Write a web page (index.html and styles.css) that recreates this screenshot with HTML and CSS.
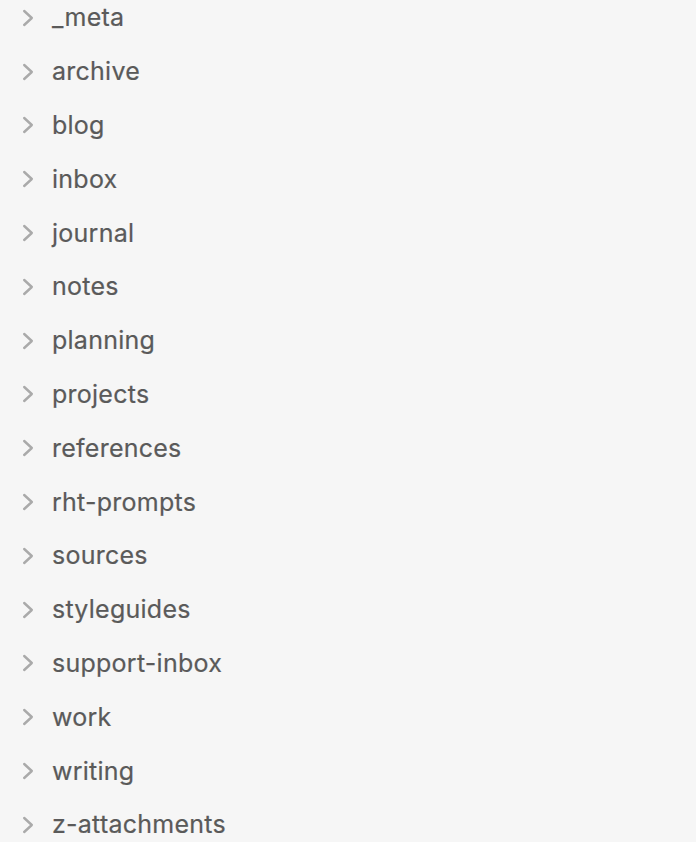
FILE: index.html
```html
<!DOCTYPE html>
<html lang="en">
<head>
<meta charset="utf-8">
<title>Files</title>
<link rel="stylesheet" href="styles.css">
</head>
<body>
<nav class="tree">
  <ul class="tree-list">
    <li class="folder"><svg class="chevron" viewBox="0 0 12 18"><path d="M2.2 2 L9.8 9 L2.2 16"/></svg><span class="name">_meta</span></li>
    <li class="folder"><svg class="chevron" viewBox="0 0 12 18"><path d="M2.2 2 L9.8 9 L2.2 16"/></svg><span class="name">archive</span></li>
    <li class="folder"><svg class="chevron" viewBox="0 0 12 18"><path d="M2.2 2 L9.8 9 L2.2 16"/></svg><span class="name">blog</span></li>
    <li class="folder"><svg class="chevron" viewBox="0 0 12 18"><path d="M2.2 2 L9.8 9 L2.2 16"/></svg><span class="name">inbox</span></li>
    <li class="folder"><svg class="chevron" viewBox="0 0 12 18"><path d="M2.2 2 L9.8 9 L2.2 16"/></svg><span class="name">journal</span></li>
    <li class="folder"><svg class="chevron" viewBox="0 0 12 18"><path d="M2.2 2 L9.8 9 L2.2 16"/></svg><span class="name">notes</span></li>
    <li class="folder"><svg class="chevron" viewBox="0 0 12 18"><path d="M2.2 2 L9.8 9 L2.2 16"/></svg><span class="name">planning</span></li>
    <li class="folder"><svg class="chevron" viewBox="0 0 12 18"><path d="M2.2 2 L9.8 9 L2.2 16"/></svg><span class="name">projects</span></li>
    <li class="folder"><svg class="chevron" viewBox="0 0 12 18"><path d="M2.2 2 L9.8 9 L2.2 16"/></svg><span class="name">references</span></li>
    <li class="folder"><svg class="chevron" viewBox="0 0 12 18"><path d="M2.2 2 L9.8 9 L2.2 16"/></svg><span class="name">rht-prompts</span></li>
    <li class="folder"><svg class="chevron" viewBox="0 0 12 18"><path d="M2.2 2 L9.8 9 L2.2 16"/></svg><span class="name">sources</span></li>
    <li class="folder"><svg class="chevron" viewBox="0 0 12 18"><path d="M2.2 2 L9.8 9 L2.2 16"/></svg><span class="name">styleguides</span></li>
    <li class="folder"><svg class="chevron" viewBox="0 0 12 18"><path d="M2.2 2 L9.8 9 L2.2 16"/></svg><span class="name">support-inbox</span></li>
    <li class="folder"><svg class="chevron" viewBox="0 0 12 18"><path d="M2.2 2 L9.8 9 L2.2 16"/></svg><span class="name">work</span></li>
    <li class="folder"><svg class="chevron" viewBox="0 0 12 18"><path d="M2.2 2 L9.8 9 L2.2 16"/></svg><span class="name">writing</span></li>
    <li class="folder"><svg class="chevron" viewBox="0 0 12 18"><path d="M2.2 2 L9.8 9 L2.2 16"/></svg><span class="name">z-attachments</span></li>
  </ul>
</nav>
</body>
</html>
```

FILE: styles.css
```css
html, body {
  margin: 0;
  padding: 0;
  height: 100%;
  overflow: hidden;
  background: #f6f6f6;
}

body {
  font-family: Inter, "Noto Sans", "Liberation Sans", sans-serif;
  color: #5a5a5a;
}

.tree-list {
  list-style: none;
  margin: -9px 0 0 0;
  padding: 0;
}

.folder {
  display: flex;
  align-items: center;
  height: 53.8px;
  padding-left: 22px;
}

.chevron {
  width: 12px;
  height: 18px;
  flex: none;
  fill: none;
  stroke: #aaaaaa;
  stroke-width: 2.4;
  stroke-linecap: round;
  stroke-linejoin: round;
}

.name {
  margin-left: 18px;
  font-size: 25px;
  line-height: 1;
  letter-spacing: 0.25px;
  -webkit-text-stroke: 0.2px #5a5a5a;
}
```
